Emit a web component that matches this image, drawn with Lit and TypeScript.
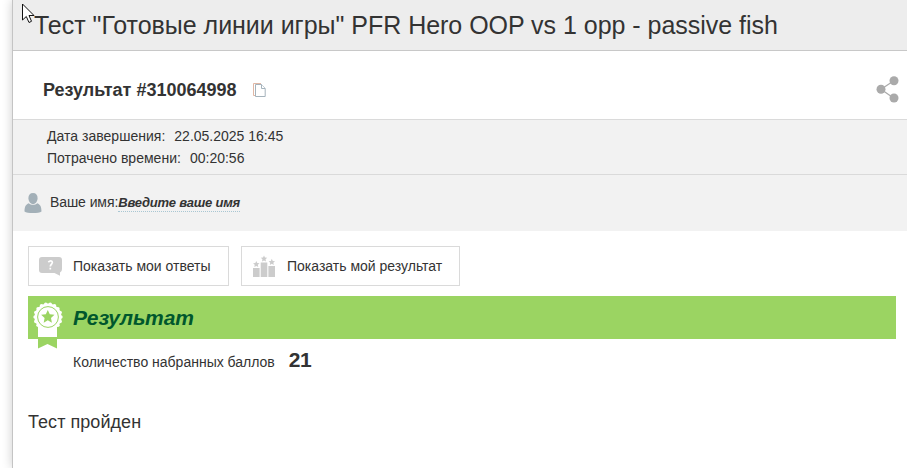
import { LitElement, html, css, svg } from "lit";
import { customElement } from "lit/decorators.js";

const star = (cx: number, cy: number, r: number) => {
  const pts = Array.from({ length: 10 }, (_, i) => {
    const a = (Math.PI * i) / 5 - Math.PI / 2;
    const q = i % 2 ? r * 0.48 : r;
    return `${(cx + q * Math.cos(a)).toFixed(2)},${(cy + q * Math.sin(a)).toFixed(2)}`;
  }).join(" ");
  return svg`<polygon points=${pts}></polygon>`;
};

const scallops = Array.from({ length: 18 }, (_, i) => {
  const a = (Math.PI * 2 * i) / 18;
  return svg`<circle cx=${(15 + 12.9 * Math.cos(a)).toFixed(2)} cy=${(15 + 12.9 * Math.sin(a)).toFixed(2)} r="1.8"></circle>`;
});

@customElement("app-root")
export class AppRoot extends LitElement {
  static styles = css`
    :host {
      display: block;
      position: relative;
      height: 468px;
      overflow: hidden;
      background: #fff;
      color: #333;
      font: 14px/22px "Liberation Sans", Arial, sans-serif;
      white-space: nowrap;
    }
    * { box-sizing: border-box; }
    svg { display: block; flex: none; }
    .page {
      margin-left: 12px;
      height: 468px;
      border-left: 1px solid #c4c4c4;
      box-shadow: 0 0 10px rgba(0, 0, 0, 0.2);
      background: #fff;
    }
    .title {
      margin: 0;
      height: 51px;
      padding-left: 21px;
      background: #ededed;
      border-bottom: 1px solid #c8c8c8;
      font-size: 25px;
      font-weight: 400;
      line-height: 51px;
      letter-spacing: -0.025px;
    }
    .head {
      display: flex;
      align-items: center;
      height: 69px;
      padding: 9px 8px 0 30px;
      border-bottom: 1px solid #dadada;
    }
    .number { font-size: 18px; font-weight: 700; margin-right: 15px; }
    .copy { margin-top: 1px; }
    .share { margin: -1px 0 0 auto; }
    .info {
      height: 55px;
      padding: 5px 0 0 34px;
      background: #f2f2f2;
      border-bottom: 1px solid #dadada;
    }
    .label { margin-right: 9px; letter-spacing: 0.02px; }
    .user {
      display: flex;
      align-items: center;
      height: 56px;
      padding-left: 11px;
      background: #f2f2f2;
    }
    .user .who { margin: -2px 0 0 8px; letter-spacing: -0.08px; }
    .name {
      font-size: 13px;
      font-weight: 700;
      font-style: italic;
      line-height: 16px;
      letter-spacing: -0.2px;
      border-bottom: 1px dotted #a9c7d3;
    }
    .actions { display: flex; gap: 12px; padding: 15px 0 0 15px; }
    .btn {
      display: flex;
      align-items: center;
      height: 40px;
      border: 1px solid #dadada;
      padding: 0 0 0 10px;
      gap: 11px;
      font: inherit;
      color: inherit;
      background: #fff;
    }
    .answers { width: 201px; }
    .results { width: 219px; }
    .banner {
      display: flex;
      margin: 10px 11px 0 15px;
      height: 43px;
      background: #9bd462;
      padding: 6px 0 0 5px;
    }
    .banner h2 {
      margin: 0 0 0 10px;
      color: #00572d;
      font-size: 21px;
      font-style: italic;
      line-height: 32px;
    }
    .score { display: flex; align-items: baseline; margin: 9px 0 0 60px; height: 24px; line-height: 24px; }
    .score b { font-size: 21px; margin-left: 14px; letter-spacing: -0.5px; }
    .passed { margin: 39px 0 0 15px; font-size: 18px; letter-spacing: 0.05px; }
    .cursor { position: absolute; left: 22px; top: 3px; }
  `;

  render() {
    return html`
      <main class="page">
        <h1 class="title"><span>Тест "Готовые линии игры" PFR Hero OOP vs 1 opp - passive fish</span></h1>
        <section class="head">
          <span class="number">Результат #310064998</span>
          <svg class="copy" width="14" height="15" viewBox="0 0 14 15" fill="#fff">
            <path d="M4 12.5H1.5V.5H9" stroke="#e0b7a5" fill="none"></path>
            <path d="M3.5 1.5H9.5L13.2 5.5V13.5H3.5Z" stroke="#a5b3bc"></path>
            <path d="M9.5 1.5V5.5H13" stroke="#a5b3bc"></path>
          </svg>
          <svg class="share" width="23" height="27" viewBox="0 0 23 27" fill="#aaa">
            <path d="M17.5 5L5 13.3L17.5 22" fill="none" stroke="#aaa" stroke-width="1.2"></path>
            <circle cx="18" cy="4.8" r="4.5"></circle><circle cx="5" cy="13.3" r="4.5"></circle><circle cx="18" cy="22" r="4.5"></circle>
          </svg>
        </section>
        <section class="info">
          <div><span class="label">Дата завершения:</span><span>22.05.2025 16:45</span></div>
          <div><span class="label">Потрачено времени:</span><span>00:20:56</span></div>
        </section>
        <section class="user">
          <svg width="18" height="21" viewBox="0 0 18 21" fill="#a3b0b8">
            <path d="M9 0C12 0 13.6 2 13.6 5C13.6 8.3 11.7 11 9 11S4.4 8.3 4.4 5C4.4 2 6 0 9 0Z"></path>
            <path d="M4.8 10.2C7 12.2 11 12.2 13.2 10.2C16.4 11.3 17.5 14 17.5 18.5C15 20.6 3 20.6 .5 18.5C.5 14 1.6 11.3 4.8 10.2Z"></path>
          </svg>
          <span class="who">Ваше имя:</span><span class="name">Введите ваше имя</span>
        </section>
        <div class="actions">
          <button class="btn answers">
            <svg width="23" height="20" viewBox="0 0 23 20">
              <path d="M3 1H20Q23 1 23 4V13Q23 16 21 16.6L21 19.8L15.5 17H3Q0 17 0 14V4Q0 1 3 1Z" fill="#ccc"></path>
              <path d="M9.3 6.2Q11.3 4.2 13 5.4C14.7 7.3 11.3 8.2 11.3 10.6M11.3 11.8V13.5" fill="none" stroke="#fff" stroke-width="1.7"></path>
            </svg>
            <span>Показать мои ответы</span>
          </button>
          <button class="btn results">
            <svg width="24" height="22" viewBox="0 0 24 22" fill="#ccc">
              <path d="M1 13H7.6V22H1ZM8.7 7.5H15.3V22H8.7ZM16.4 11H23V22H16.4Z"></path>
              ${star(4.3, 9.3, 3.4)}${star(12, 3.8, 3.4)}${star(19.8, 7.2, 3.4)}
            </svg>
            <span>Показать мой результат</span>
          </button>
        </div>
        <section class="banner">
          <svg width="30" height="47" viewBox="0 0 30 47">
            <path d="M5 36H24V46.5L14.5 42L5 46.5Z" fill="#9bd462"></path>
            <path d="M5 23H24V35H5Z" fill="#fff"></path>
            <g fill="#fff">${scallops}<circle cx="15" cy="15" r="13.5"></circle></g>
            <circle cx="15" cy="15" r="10.4" fill="none" stroke="#9bd462"></circle>
            <g fill="#9bd462">${star(14.8, 15, 7)}</g>
          </svg>
          <h2><span>Результат</span></h2>
        </section>
        <div class="score"><span>Количество набранных баллов</span><b>21</b></div>
        <div class="passed"><span>Тест пройден</span></div>
      </main>
      <svg class="cursor" width="13" height="21" viewBox="0 0 13 21">
        <path d="M.5 1V17L4.3 13.5L7 19.5L9.5 18.3L7 12.5H12Z" fill="#fff" stroke="#111"></path>
      </svg>
    `;
  }
}
